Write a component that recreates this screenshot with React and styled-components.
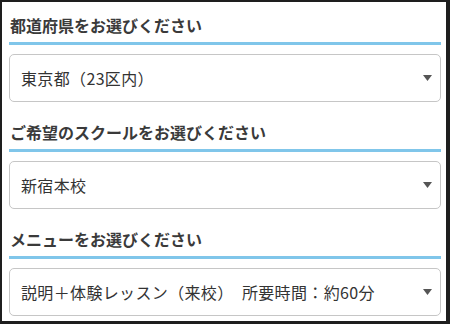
import styled, { createGlobalStyle } from "styled-components";

const GlobalStyle = createGlobalStyle`
  html, body {
    margin: 0;
    padding: 0;
    background: #ffffff;
  }
  * {
    box-sizing: border-box;
  }
`;

const Frame = styled.div`
  width: 450px;
  height: 324px;
  border-style: solid;
  border-color: #1e1e1e;
  border-width: 2px 4px 3px 2px;
  background: #fff;
  padding: 11px 5px 0 7px;
  font-family: "Noto Sans CJK JP", "Noto Sans", sans-serif;
  color: #333;
  display: flex;
  flex-direction: column;
  gap: 18px;
`;

const Section = styled.section`
  display: flex;
  flex-direction: column;
  gap: 9px;
`;

const Heading = styled.h2`
  margin: 0;
  font-size: 16px;
  line-height: 24px;
  font-weight: 700;
  color: #3a3a3a;
  padding: 0 1px 5px;
  border-bottom: 3px solid #80c6ea;
`;

const SelectBox = styled.div`
  height: 48px;
  border: 1px solid #c6c6c6;
  border-radius: 5px;
  background: #fff;
  display: flex;
  align-items: center;
  justify-content: space-between;
  padding: 0 8px 0 11px;
  font-size: 16px;
  letter-spacing: 0.35px;
  color: #333;
  white-space: pre;
`;

const Arrow = () => (
  <svg width="9" height="6" viewBox="0 0 9 6">
    <path d="M0 0 H9 L4.5 6 Z" fill="#555" />
  </svg>
);

const fields = [
  { label: "都道府県をお選びください", value: "東京都（23区内）" },
  { label: "ご希望のスクールをお選びください", value: "新宿本校" },
  { label: "メニューをお選びください", value: "説明＋体験レッスン（来校）　所要時間：約60分" },
];

export default function App() {
  return (
    <>
      <GlobalStyle />
      <Frame>
        {fields.map((f) => (
          <Section key={f.label}>
            <Heading>{f.label}</Heading>
            <SelectBox>
              <span>{f.value}</span>
              <Arrow />
            </SelectBox>
          </Section>
        ))}
      </Frame>
    </>
  );
}
